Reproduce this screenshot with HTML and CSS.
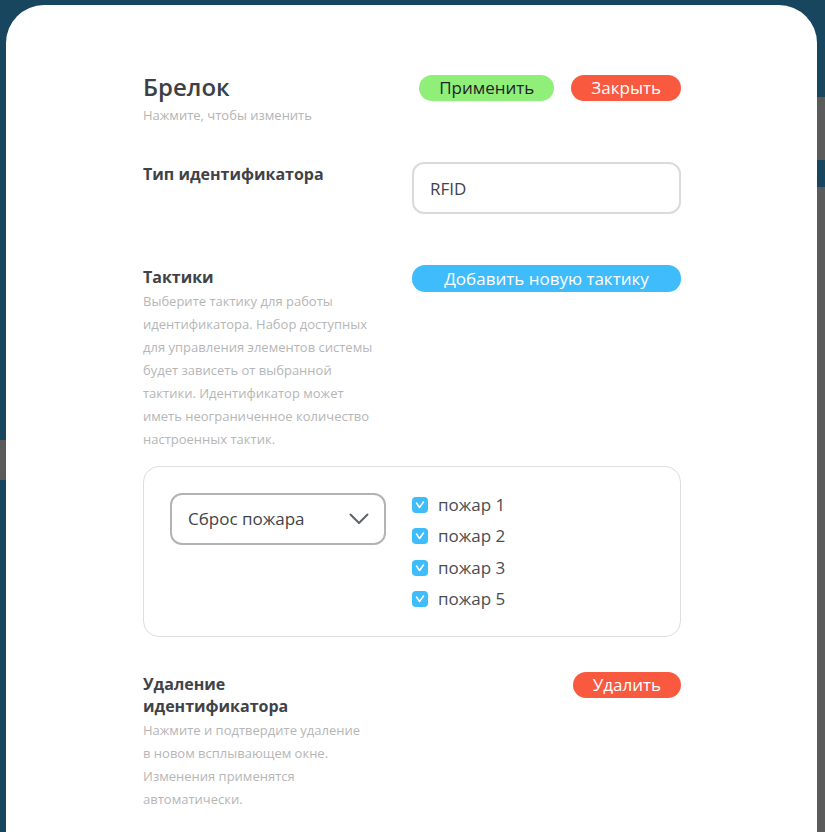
FILE: index.html
```html
<!DOCTYPE html>
<html lang="ru">
<head>
<meta charset="utf-8">
<title>Брелок</title>
<link rel="stylesheet" href="styles.css">
</head>
<body>
<div class="page">
  <div class="side side-left">
    <div class="strip-blue s-l1"></div>
    <div class="strip-gray s-l2"></div>
    <div class="strip-blue s-l3"></div>
  </div>
  <div class="modal">
    <div class="header">
      <div class="header-text">
        <h1 class="title">Брелок</h1>
        <p class="subtitle">Нажмите, чтобы изменить</p>
      </div>
      <div class="header-actions">
        <button class="btn btn-green">Применить</button>
        <button class="btn btn-red">Закрыть</button>
      </div>
    </div>

    <div class="row row-type">
      <div class="row-left">
        <div class="label">Тип идентификатора</div>
      </div>
      <div class="row-right">
        <div class="input">RFID</div>
      </div>
    </div>

    <div class="row row-tactics">
      <div class="row-left">
        <div class="label">Тактики</div>
        <p class="desc desc-tactics">Выберите тактику для работы идентификатора. Набор доступных для управления элементов системы будет зависеть от выбранной тактики. Идентификатор может иметь неограниченное количество настроенных тактик.</p>
      </div>
      <div class="row-right">
        <button class="btn btn-blue btn-wide">Добавить новую тактику</button>
      </div>
    </div>

    <div class="card">
      <div class="select">
        <span>Сброс пожара</span>
        <svg class="chevron" width="20" height="12" viewBox="0 0 20 12"><path d="M1.5 1.5 L10 10 L18.5 1.5" fill="none" stroke="#5f6368" stroke-width="2" stroke-linecap="round" stroke-linejoin="round"/></svg>
      </div>
      <ul class="checklist">
        <li class="check-item"><span class="box"><svg width="10" height="8" viewBox="0 0 10 8"><path d="M1.5 2 L4.5 6.5 L8.5 1" fill="none" stroke="#fff" stroke-width="1.5" stroke-linecap="round" stroke-linejoin="round"/></svg></span>пожар 1</li>
        <li class="check-item"><span class="box"><svg width="10" height="8" viewBox="0 0 10 8"><path d="M1.5 2 L4.5 6.5 L8.5 1" fill="none" stroke="#fff" stroke-width="1.5" stroke-linecap="round" stroke-linejoin="round"/></svg></span>пожар 2</li>
        <li class="check-item"><span class="box"><svg width="10" height="8" viewBox="0 0 10 8"><path d="M1.5 2 L4.5 6.5 L8.5 1" fill="none" stroke="#fff" stroke-width="1.5" stroke-linecap="round" stroke-linejoin="round"/></svg></span>пожар 3</li>
        <li class="check-item"><span class="box"><svg width="10" height="8" viewBox="0 0 10 8"><path d="M1.5 2 L4.5 6.5 L8.5 1" fill="none" stroke="#fff" stroke-width="1.5" stroke-linecap="round" stroke-linejoin="round"/></svg></span>пожар 5</li>
      </ul>
    </div>

    <div class="row row-delete">
      <div class="row-left">
        <div class="label">Удаление идентификатора</div>
        <p class="desc desc-delete">Нажмите и подтвердите удаление в новом всплывающем окне. Изменения применятся автоматически.</p>
      </div>
      <div class="row-right row-right-end">
        <button class="btn btn-red">Удалить</button>
      </div>
    </div>
  </div>
  <div class="side side-right">
    <div class="strip-blue s-r1"></div>
    <div class="strip-gray s-r2"></div>
    <div class="strip-blue s-r3"></div>
    <div class="strip-gray s-r4"></div>
  </div>
</div>
</body>
</html>
```

FILE: styles.css
```css
* { box-sizing: border-box; }
html, body {
  margin: 0;
  padding: 0;
  height: 100%;
  overflow: hidden;
}
body {
  background: #18465f;
  font-family: "Open Sans", "Noto Sans", sans-serif;
}
.page {
  display: flex;
  height: 832px;
}
.side {
  display: flex;
  flex-direction: column;
  flex: none;
}
.side-left { width: 6px; }
.side-right { width: 8px; }
.strip-blue { background: #18465f; }
.strip-gray { background: #5b5b5b; }
.s-l1 { height: 440px; }
.s-l2 { height: 40px; }
.s-l3 { flex: 1; }
.s-r1 { height: 97px; }
.s-r2 { height: 63px; }
.s-r3 { height: 27px; }
.s-r4 { flex: 1; }

.modal {
  flex: none;
  width: 811px;
  margin-top: 5px;
  background: #fff;
  border-radius: 38px 38px 0 0;
  padding: 67px 136px 0 137px;
}

.header {
  display: flex;
  justify-content: space-between;
  align-items: flex-start;
}
.title {
  margin: 0;
  font-size: 24px;
  font-weight: 600;
  line-height: 30px;
  color: #3c4045;
}
.subtitle {
  margin: 4px 0 0;
  font-size: 13px;
  line-height: 18px;
  color: #b4b4b4;
}
.header-actions {
  display: flex;
  gap: 17px;
  padding-top: 3px;
}
.btn {
  font-family: "Open Sans", "Noto Sans", sans-serif;
  font-size: 17px;
  line-height: 26px;
  height: 26px;
  border: none;
  border-radius: 13px;
  padding: 0 20px;
  color: #fff;
  cursor: pointer;
}
.btn-green { background: #90ef79; color: #1f2326; }
.btn-red { background: #f8593f; }
.btn-blue { background: #3fbcfb; }
.btn-wide { width: 100%; height: 27px; }

.row {
  display: grid;
  grid-template-columns: 1fr 269px;
  align-items: start;
}
.row-type { margin-top: 38px; }
.row-tactics { margin-top: 51px; }
.row-delete { margin-top: 35px; }
.row-right-end { display: flex; justify-content: flex-end; }
.label {
  max-width: 225px;
  font-size: 16px;
  font-weight: 700;
  line-height: 22px;
  color: #3f4348;
  padding-top: 1px;
}
.desc {
  margin: 1.5px 0 0;
  font-size: 13px;
  line-height: 23px;
  color: #b6b6b6;
}
.desc-tactics { max-width: 232px; }
.desc-delete { max-width: 220px; margin-top: 2px; }

.input {
  height: 52px;
  border: 2px solid #dadada;
  border-radius: 12px;
  padding: 0 16px;
  display: flex;
  align-items: center;
  font-size: 17px;
  color: #3f4348;
}

.card {
  margin-top: 15px;
  border: 1px solid #dedede;
  border-radius: 16px;
  padding: 26px 26px 25px;
  display: grid;
  grid-template-columns: 1fr 242px;
  align-items: start;
}
.select {
  width: 216px;
  height: 52px;
  border: 2px solid #b3b3b3;
  border-radius: 12px;
  padding: 0 15px 0 16px;
  display: flex;
  align-items: center;
  justify-content: space-between;
  font-size: 17px;
  color: #3f4348;
}
.chevron { display: block; }
.checklist {
  list-style: none;
  margin: 0;
  padding: 0;
  display: flex;
  flex-direction: column;
  gap: 7.5px;
}
.check-item {
  display: flex;
  align-items: center;
  gap: 10px;
  font-size: 17px;
  line-height: 24px;
  color: #484c51;
}
.box {
  width: 16px;
  height: 16px;
  border-radius: 4px;
  background: #3fbcfb;
  display: flex;
  align-items: center;
  justify-content: center;
  flex: none;
}
```
